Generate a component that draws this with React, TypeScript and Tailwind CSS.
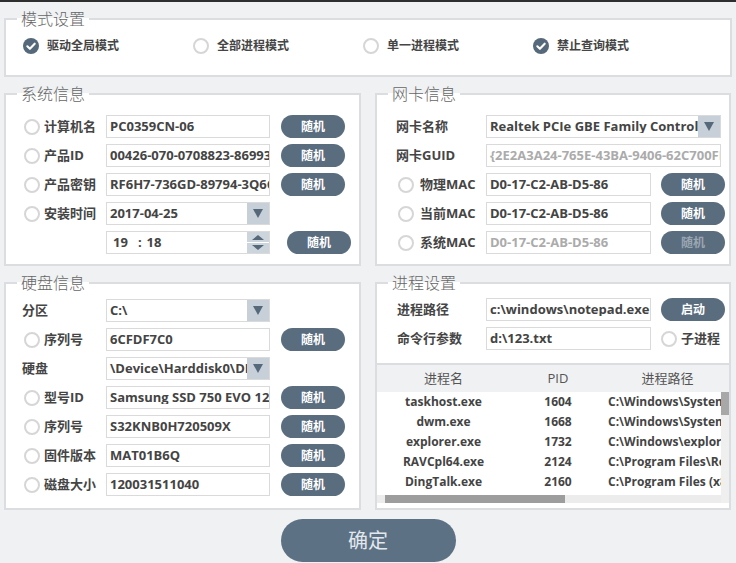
import React from "react";

function Radio({ checked = false }: { checked?: boolean }) {
  if (checked)
    return (
      <svg width="16" height="16" viewBox="0 0 16 16" className="shrink-0">
        <circle cx="8" cy="8" r="8" fill="#56697b" />
        <path d="M4.3 8.3 L6.9 10.8 L11.7 5.7" fill="none" stroke="#fff" strokeWidth="2.1" strokeLinecap="round" strokeLinejoin="round" />
      </svg>
    );
  return <span className="block h-4 w-4 shrink-0 rounded-full border-2 border-[#d6d6d6] bg-white" />;
}

function Label({ children, className = "" }: { children: React.ReactNode; className?: string }) {
  return <span className={`whitespace-nowrap text-[13px] font-bold leading-none text-[#454545] ${className}`}>{children}</span>;
}

function Arrow() {
  return (
    <div className="flex h-full w-[22px] shrink-0 items-center justify-center bg-[#c7d0d9]">
      <svg width="10" height="9" viewBox="0 0 10 9">
        <path d="M0 0H10L5 9Z" fill="#56697b" />
      </svg>
    </div>
  );
}

function Spin() {
  return (
    <div className="flex h-full w-[22px] shrink-0 flex-col">
      <div className="flex flex-1 items-end justify-center bg-[#ccd4dc] pb-[2px]">
        <svg width="12" height="5" viewBox="0 0 12 5">
          <path d="M0 5H12L6 0Z" fill="#56697b" />
        </svg>
      </div>
      <div className="h-[1px] bg-white" />
      <div className="flex flex-1 items-start justify-center bg-[#ccd4dc] pt-[2px]">
        <svg width="12" height="5" viewBox="0 0 12 5">
          <path d="M0 0H12L6 5Z" fill="#56697b" />
        </svg>
      </div>
    </div>
  );
}

function Field({
  w,
  children,
  disabled = false,
  arrow = false,
}: {
  w: string;
  children: React.ReactNode;
  disabled?: boolean;
  arrow?: boolean;
}) {
  return (
    <div className={`flex h-[23px] shrink-0 items-center overflow-hidden border border-[#dadada] bg-white ${w}`}>
      <div
        className={`min-w-0 flex-1 overflow-hidden whitespace-nowrap pl-[3px] text-[13px] font-bold leading-none ${
          disabled ? "text-[#ababab]" : "text-[#444]"
        }`}
      >
        {children}
      </div>
      {arrow && <Arrow />}
    </div>
  );
}

function Btn({ className = "", disabled = false, children = "随机" }: { className?: string; disabled?: boolean; children?: React.ReactNode }) {
  return (
    <button
      className={`h-[23px] w-[64px] shrink-0 rounded-full bg-[#5a6d7f] text-[12px] font-bold leading-none ${
        disabled ? "text-[#9aa6b2]" : "text-white"
      } ${className}`}
    >
      {children}
    </button>
  );
}

function Group({ title, className = "", children }: { title: string; className?: string; children: React.ReactNode }) {
  return (
    <fieldset className={`min-w-0 border-2 border-[#dcdde0] bg-white ${className}`}>
      <legend className="ml-[11px] px-[4px] text-[16px] font-light leading-[20px] text-[#666]">{title}</legend>
      {children}
    </fieldset>
  );
}

function SysRow({ label, value, radio = true }: { label: string; value: string; radio?: boolean }) {
  return (
    <div className="flex h-[23px] items-center">
      <div className={`flex w-[100px] shrink-0 items-center gap-[4px] ${radio ? "pl-[18px]" : "pl-[16px]"}`}>
        {radio && <Radio />}
        <Label>{label}</Label>
      </div>
      <Field w="w-[164px]">{value}</Field>
      <Btn className="ml-[11px]" />
    </div>
  );
}

function SelRow({ label, value }: { label: string; value: string }) {
  return (
    <div className="flex h-[23px] items-center">
      <div className="flex w-[100px] shrink-0 items-center pl-[16px]">
        <Label>{label}</Label>
      </div>
      <Field w="w-[164px]" arrow>
        {value}
      </Field>
    </div>
  );
}

function MacRow({ label, disabled = false }: { label: string; disabled?: boolean }) {
  return (
    <div className="flex h-[23px] items-center">
      <div className="flex w-[109px] shrink-0 items-center gap-[6px] pl-[21px]">
        <Radio />
        <Label>{label}</Label>
      </div>
      <Field w="w-[165px]" disabled={disabled}>
        D0-17-C2-AB-D5-86
      </Field>
      <Btn className="ml-[10px]" disabled={disabled} />
    </div>
  );
}

const procs = [
  ["taskhost.exe", "1604", "C:\\Windows\\System32\\taskhost.exe"],
  ["dwm.exe", "1668", "C:\\Windows\\System32\\dwm.exe"],
  ["explorer.exe", "1732", "C:\\Windows\\explorer.exe"],
  ["RAVCpl64.exe", "2124", "C:\\Program Files\\Realtek\\Audio\\RAVCpl64.exe"],
  ["DingTalk.exe", "2160", "C:\\Program Files (x86)\\DingDing\\DingTalk.exe"],
];

export default function App() {
  return (
    <div className="h-[563px] w-[736px] overflow-hidden bg-[#eff1f3] font-['Open_Sans','Noto_Sans_CJK_SC',sans-serif]">
      <div className="h-[2px] bg-[#2e2e2e]" />
      <div className="flex flex-col gap-[7px] px-[4px] pt-[7px]">
        {/* 模式设置 */}
        <Group title="模式设置" className="h-[68px]">
          <div className="flex h-[22px] items-center pl-[17px] pt-[0px] mt-[6px]">
            {[
              ["驱动全局模式", true],
              ["全部进程模式", false],
              ["单一进程模式", false],
              ["禁止查询模式", true],
            ].map(([t, c]) => (
              <div key={t as string} className="flex w-[170px] items-center gap-[8px]">
                <Radio checked={c as boolean} />
                <span className="whitespace-nowrap text-[12px] font-bold leading-none text-[#454545]">{t as string}</span>
              </div>
            ))}
          </div>
        </Group>

        <div className="grid grid-cols-[357px_356px] gap-x-[14px] gap-y-[7px]">
          {/* 系统信息 */}
          <Group title="系统信息" className="h-[182px]">
            <div className="flex flex-col gap-[6px] pt-[11px]">
              <SysRow label="计算机名" value="PC0359CN-06" />
              <SysRow label="产品ID" value="00426-070-0708823-86993" />
              <SysRow label="产品密钥" value="RF6H7-736GD-89794-3Q6C9-KDG7M" />
              <div className="flex h-[23px] items-center">
                <div className="flex w-[100px] shrink-0 items-center gap-[4px] pl-[18px]">
                  <Radio />
                  <Label>安装时间</Label>
                </div>
                <Field w="w-[164px]" arrow>
                  2017-04-25
                </Field>
              </div>
              <div className="flex h-[23px] items-center">
                <div className="w-[100px] shrink-0" />
                <div className="flex h-[23px] w-[164px] shrink-0 items-center overflow-hidden border border-[#dadada] bg-white">
                  <div className="flex flex-1 items-center text-[13px] font-bold leading-none text-[#444]">
                    <span className="ml-[6px]">19</span>
                    <span className="ml-[10px]">:</span>
                    <span className="ml-[5px]">18</span>
                  </div>
                  <Spin />
                </div>
                <Btn className="ml-[17px]" />
              </div>
            </div>
          </Group>

          {/* 网卡信息 */}
          <Group title="网卡信息" className="h-[182px]">
            <div className="flex flex-col gap-[6px] pt-[11px]">
              <div className="flex h-[23px] items-center">
                <div className="flex w-[109px] shrink-0 items-center pl-[19px]">
                  <Label>网卡名称</Label>
                </div>
                <Field w="w-[235px]" arrow>
                  Realtek PCIe GBE Family Controller
                </Field>
              </div>
              <div className="flex h-[23px] items-center">
                <div className="flex w-[109px] shrink-0 items-center pl-[19px]">
                  <Label>网卡GUID</Label>
                </div>
                <Field w="w-[235px]" disabled>
                  {"{2E2A3A24-765E-43BA-9406-62C700FE5D1A}"}
                </Field>
              </div>
              <MacRow label="物理MAC" />
              <MacRow label="当前MAC" />
              <MacRow label="系统MAC" disabled />
            </div>
          </Group>

          {/* 硬盘信息 */}
          <Group title="硬盘信息" className="h-[237px]">
            <div className="flex flex-col gap-[6px] pt-[6px]">
              <SelRow label="分区" value="C:\" />
              <SysRow label="序列号" value="6CFDF7C0" />
              <SelRow label="硬盘" value="\Device\Harddisk0\DR0" />
              <SysRow label="型号ID" value="Samsung SSD 750 EVO 120GB" />
              <SysRow label="序列号" value="S32KNB0H720509X" />
              <SysRow label="固件版本" value="MAT01B6Q" />
              <SysRow label="磁盘大小" value="120031511040" />
            </div>
          </Group>

          {/* 进程设置 */}
          <Group title="进程设置" className="h-[237px]">
            <div className="flex flex-col">
              <div className="flex flex-col gap-[6px] pt-[5px]">
                <div className="flex h-[23px] items-center">
                  <div className="flex w-[109px] shrink-0 items-center pl-[20px]">
                    <Label>进程路径</Label>
                  </div>
                  <Field w="w-[165px]">c:\windows\notepad.exe</Field>
                  <Btn className="ml-[10px]">启动</Btn>
                </div>
                <div className="flex h-[23px] items-center">
                  <div className="flex w-[109px] shrink-0 items-center pl-[20px]">
                    <Label>命令行参数</Label>
                  </div>
                  <Field w="w-[165px]">d:\123.txt</Field>
                  <div className="ml-[10px] flex items-center gap-[4px]">
                    <Radio />
                    <Label>子进程</Label>
                  </div>
                </div>
              </div>

              <div className="mt-[13px] border-t-2 border-[#dcdde0]">
                <div className="grid h-[27px] grid-cols-[133px_96px_1fr] items-center bg-[#f0f1f3] text-center text-[13px] leading-none text-[#555]">
                  <span>进程名</span>
                  <span>PID</span>
                  <span>进程路径</span>
                </div>
                <div className="flex">
                  <div className="flex min-w-0 flex-1 flex-col">
                    {procs.map((p) => (
                      <div
                        key={p[1]}
                        className="grid h-[20px] grid-cols-[133px_96px_1fr] items-center text-[12px] font-bold leading-none text-[#444]"
                      >
                        <span className="text-center">{p[0]}</span>
                        <span className="text-center">{p[1]}</span>
                        <span className="overflow-hidden whitespace-nowrap pl-[2px]">{p[2]}</span>
                      </div>
                    ))}
                    <div className="mt-[3px] h-[8px] bg-[#ececec]">
                      <div className="ml-[8px] h-full w-[180px] bg-[#9d9d9d]" />
                    </div>
                  </div>
                  <div className="w-[8px] shrink-0 bg-[#efefef]">
                    <div className="h-[23px] bg-[#a8a8a8]" />
                  </div>
                </div>
              </div>
            </div>
          </Group>
        </div>

        <div className="mt-[2px] flex justify-center">
          <button className="h-[43px] w-[175px] rounded-full bg-[#5d7184] text-[20px] leading-none text-[#e2e8ee]">确定</button>
        </div>
      </div>
    </div>
  );
}
